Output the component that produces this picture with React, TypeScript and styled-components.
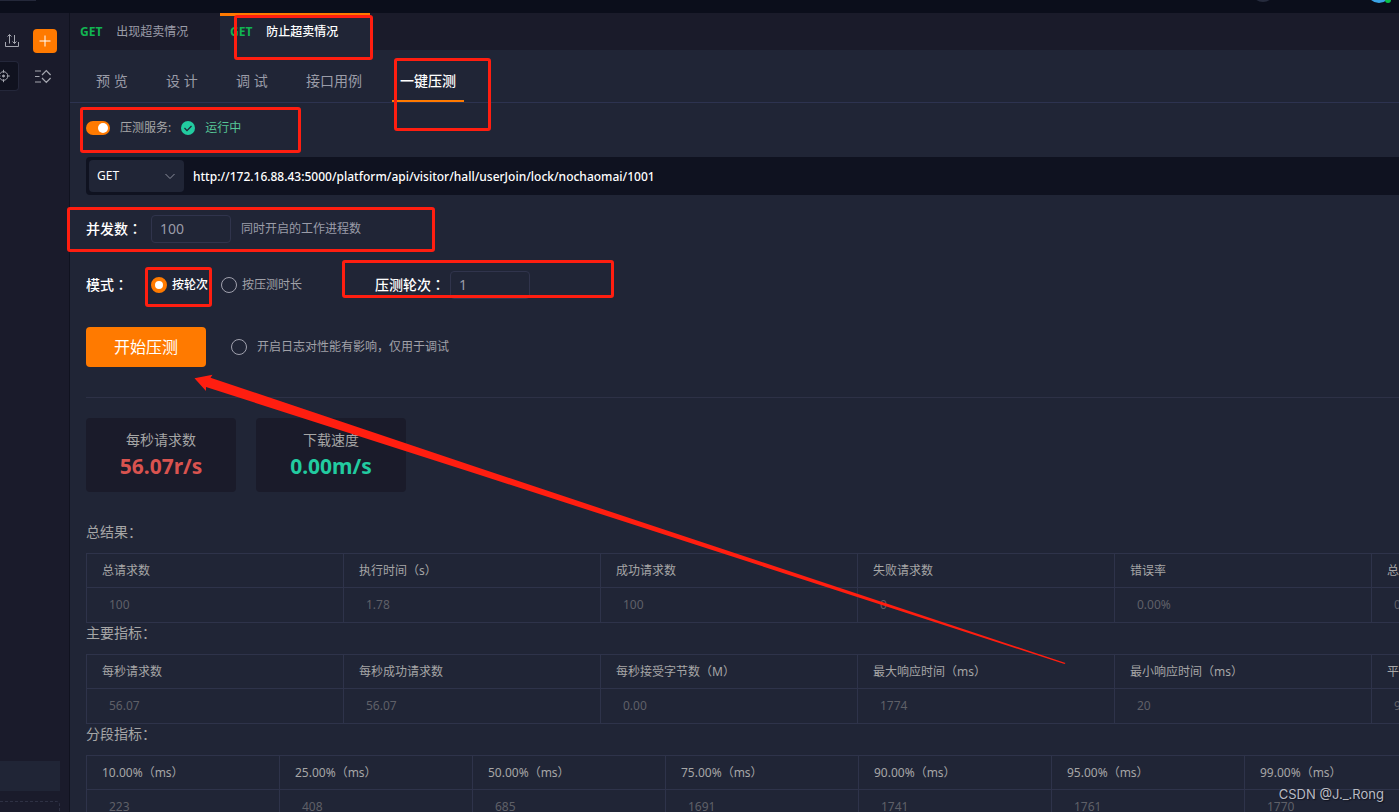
import React from "react";
import styled, { createGlobalStyle } from "styled-components";

const GlobalStyle = createGlobalStyle`
  *, *::before, *::after { box-sizing: border-box; }
  html, body, #root { height: 100%; }
  body {
    margin: 0;
    overflow: hidden;
    background: #202536;
    color: #a6a6a6;
    font-family: "Noto Sans", "Noto Sans CJK SC", sans-serif;
    font-size: 12px;
    line-height: 20px;
  }
  button, input, select { font: inherit; }
`;

const Page = styled.div`
  position: relative;
  display: flex;
  flex-direction: column;
  height: 100vh;
  overflow: hidden;
`;

const TopBar = styled.header`
  display: flex;
  justify-content: space-between;
  flex: none;
  height: 13px;
  background: #0b0e1b;
`;

const TopTab = styled.div`
  width: 36px;
  height: 1px;
  background: #24283a;
`;

const Body = styled.div`
  display: flex;
  flex: 1;
  min-height: 0;
`;

const Sidebar = styled.aside`
  display: flex;
  flex-direction: column;
  flex: none;
  width: 70px;
  background: #1a1b2b;
  border-right: 1px solid #10121f;
`;

const SideRow = styled.div<{ $top: number }>`
  display: flex;
  align-items: center;
  justify-content: space-between;
  padding-right: 12px;
  margin-top: ${(p) => p.$top}px;
`;

const IconButton = styled.button<{ $indent?: number }>`
  display: flex;
  padding: 0;
  margin-left: ${(p) => p.$indent ?? 0}px;
  border: 0;
  background: none;
  color: #a5a7b0;
`;

const AddButton = styled(IconButton)`
  align-items: center;
  justify-content: center;
  width: 24px;
  height: 24px;
  border-radius: 4px;
  background: #ff7a00;
  color: #fff;
`;

const LocateButton = styled(IconButton)`
  align-items: center;
  width: 19px;
  height: 30px;
  border: 1px solid #24273a;
  border-left: 0;
  border-radius: 0 4px 4px 0;
  background: #10121f;
`;

const SideSelected = styled.div`
  width: 60px;
  height: 30px;
  margin-top: auto;
  background: #202536;
`;

const SideDropArea = styled.div`
  width: 60px;
  height: 11px;
  margin-top: 10px;
  border: 1px dashed #2e3144;
  border-width: 1px 1px 0 0;
  border-radius: 0 4px 0 0;
`;

const Main = styled.main`
  flex: 1;
  min-width: 0;
  overflow: hidden;
`;

const TabBar = styled.div`
  display: flex;
  height: 37px;
  background: #1a1b2a;
`;

const Tab = styled.button<{ $active?: boolean }>`
  display: flex;
  align-items: center;
  gap: 14px;
  width: 150px;
  padding: 0 10px;
  border: 0;
  border-top: 3px solid ${(p) => (p.$active ? "#ff7a00" : "transparent")};
  border-bottom: 3px solid transparent;
  background: ${(p) => (p.$active ? "#202536" : "none")};
  color: ${(p) => (p.$active ? "#fff" : "#9a9ca8")};
  font-weight: ${(p) => (p.$active ? 500 : 400)};
`;

const Method = styled.span`
  color: #12b452;
  font-weight: 700;
`;

const SubNav = styled.nav`
  display: flex;
  gap: 22px;
  height: 53px;
  padding-left: 18px;
  border-bottom: 1px solid #2d3350;
`;

const SubTab = styled.a<{ $active?: boolean }>`
  min-width: 48px;
  padding: 21px 8px 0;
  border-bottom: 2px solid ${(p) => (p.$active ? "#ff7a00" : "transparent")};
  color: ${(p) => (p.$active ? "#fff" : "#9a9ca8")};
  font-size: 14px;
  font-weight: ${(p) => (p.$active ? 500 : 400)};
  text-decoration: none;
  white-space: nowrap;
`;

const Content = styled.div`
  padding-left: 16px;
`;

const ServiceRow = styled.div`
  display: flex;
  align-items: center;
  height: 50px;
  margin-bottom: 4px;
`;

const Switch = styled.input`
  appearance: none;
  display: flex;
  align-items: center;
  justify-content: flex-end;
  width: 24px;
  height: 14px;
  margin: 0 10px 0 0;
  padding: 2px;
  border-radius: 7px;
  background: #ff7a00;
  &::before {
    content: "";
    width: 10px;
    height: 10px;
    border-radius: 50%;
    background: #fff;
  }
`;

const CheckIcon = styled.svg`
  margin: 0 10px;
`;

const Running = styled.span`
  color: #56c596;
`;

const UrlBar = styled.div`
  display: flex;
  align-items: center;
  gap: 9px;
  height: 38px;
  padding: 3px;
  border-radius: 4px 0 0 4px;
  background: #0f1220;
  color: #fff;
`;

const SelectWrap = styled.div`
  display: grid;
  align-items: center;
  flex: none;
  width: 95px;
  height: 32px;
  border-radius: 4px;
  background: #202536;
  > * { grid-area: 1 / 1; }
  svg { justify-self: end; margin-right: 8px; pointer-events: none; }
`;

const MethodSelect = styled.select`
  appearance: none;
  width: 100%;
  height: 32px;
  padding: 0 8px;
  border: 0;
  background: none;
  color: #fff;
`;

const UrlInput = styled.input`
  flex: 1;
  min-width: 0;
  padding: 2px 0 0;
  border: 0;
  background: none;
  color: #fff;
  font-weight: 500;
`;

const FormRow = styled.div<{ $top: number }>`
  display: flex;
  align-items: center;
  height: 28px;
  margin-top: ${(p) => p.$top}px;
`;

const FieldLabel = styled.label<{ $width: number }>`
  flex: none;
  width: ${(p) => p.$width}px;
  padding-bottom: 2px;
  color: #fff;
  font-size: 14px;
  font-weight: 500;
`;

const Colon = styled.span`
  font-family: "Noto Sans CJK TC", sans-serif;
`;

const NumberInput = styled.input`
  width: 80px;
  height: 28px;
  margin-right: 10px;
  padding: 0 8px 2px;
  border: 1px solid #30344c;
  border-radius: 4px;
  background: none;
  color: #9a9ca8;
  font-size: 14px;
`;

const Hint = styled.span`
  color: #9a9ca8;
`;

const Choice = styled.label<{ $checked?: boolean; $gap: number }>`
  display: flex;
  align-items: center;
  gap: ${(p) => p.$gap}px;
  color: ${(p) => (p.$checked ? "#fff" : "#a0a1a8")};
  font-weight: ${(p) => (p.$checked ? 500 : 400)};
  white-space: nowrap;
`;

const Dot = styled.input`
  appearance: none;
  width: 16px;
  height: 16px;
  margin: 0;
  border: 1px solid #a0a1ae;
  border-radius: 50%;
  &:checked {
    border: 4px solid #ff7a00;
    background: #fff;
  }
`;

const ChoiceGroup = styled.div`
  display: flex;
  gap: 13px;
  margin-right: 73px;
`;

const ActionRow = styled.div`
  display: flex;
  align-items: center;
  gap: 25px;
  margin: 28px 0 30px;
`;

const StartButton = styled.button`
  width: 120px;
  height: 40px;
  padding: 0;
  border: 0;
  border-radius: 4px;
  background: #ff7a00;
  color: #fff;
  font-size: 16px;
`;

const Stats = styled.div`
  display: flex;
  gap: 20px;
  padding-top: 20px;
  margin-bottom: 30px;
  border-top: 1px solid #2d3146;
`;

const StatCard = styled.div`
  width: 150px;
  height: 74px;
  padding-top: 12px;
  border-radius: 4px;
  background: #1a1b2a;
  font-size: 14px;
  text-align: center;
`;

const StatValue = styled.div<{ $color: string }>`
  color: ${(p) => p.$color};
  font-size: 21px;
  font-weight: 700;
  line-height: 32px;
`;

const SectionTitle = styled.h2`
  height: 21px;
  margin: 0 0 10px;
  font-size: 14px;
  font-weight: 400;
  line-height: 19px;
`;

const cellBorder = "1px solid #2e334a";

const Table = styled.table`
  width: max-content;
  border-collapse: separate;
  border-spacing: 0;
  border-top: ${cellBorder};
  border-left: ${cellBorder};
`;

const HeadCell = styled.th<{ $width: number }>`
  min-width: ${(p) => p.$width}px;
  height: 34px;
  padding: 0 0 0 15px;
  border-right: ${cellBorder};
  border-bottom: ${cellBorder};
  font-weight: 400;
  text-align: left;
`;

const Cell = styled.td`
  height: 35px;
  padding: 0 0 0 22px;
  border-right: ${cellBorder};
  border-bottom: ${cellBorder};
  color: #5f6068;
`;

const Watermark = styled.div`
  position: absolute;
  right: 15px;
  bottom: 8px;
  color: #b9bbc2;
  font-family: Inter, sans-serif;
  font-size: 13px;
  text-shadow: 1px 1px 1px #11131f;
`;

const Mark = styled.div<{ $x: number; $y: number; $w: number; $h: number }>`
  position: absolute;
  left: ${(p) => p.$x}px;
  top: ${(p) => p.$y}px;
  width: ${(p) => p.$w}px;
  height: ${(p) => p.$h}px;
  border: 3px solid #ff1e10;
  border-radius: 3px;
  pointer-events: none;
`;

const Arrow = styled.svg`
  position: absolute;
  left: 190px;
  top: 370px;
  pointer-events: none;
`;

const marks = [
  [234, 15, 139, 45],
  [394, 58, 97, 73],
  [80, 107, 221, 46],
  [67, 207, 368, 45],
  [145, 267, 67, 40],
  [342, 260, 272, 38],
];

type ResultProps = { title: string; width: number; heads: string[]; values: string[] };

function Result({ title, width, heads, values }: ResultProps) {
  return (
    <section>
      <SectionTitle>{title}</SectionTitle>
      <Table>
        <thead>
          <tr>
            {heads.map((h) => (
              <HeadCell key={h} $width={width}>{h}</HeadCell>
            ))}
          </tr>
        </thead>
        <tbody>
          <tr>
            {values.map((v, i) => (
              <Cell key={i}>{v}</Cell>
            ))}
          </tr>
        </tbody>
      </Table>
    </section>
  );
}

export default function App() {
  return (
    <Page>
      <GlobalStyle />
      <TopBar>
        <TopTab />
        <svg width="149" height="6" viewBox="0 0 149 6">
          <circle cx="13" cy="-10" r="12" fill="#262b3d" />
          <circle cx="129" cy="-9" r="12" fill="#3ba4e6" />
          <circle cx="138" cy="0" r="3" fill="#0cc04a" />
        </svg>
      </TopBar>
      <Body>
        <Sidebar>
          <SideRow $top={16}>
            <IconButton $indent={4} aria-label="导入">
              <svg width="16" height="16" viewBox="0 0 16 16" fill="none" stroke="currentColor">
                <path d="M1.500 9v4.500h13V9M5.500 10.500V1.500M3.500 3.500l2-2 2 2M10.500 2v8.500M8.500 8.500l2 2 2-2" />
              </svg>
            </IconButton>
            <AddButton aria-label="新建">
              <svg width="12" height="12" viewBox="0 0 12 12" stroke="currentColor">
                <path d="M6 .5v11M.5 6h11" />
              </svg>
            </AddButton>
          </SideRow>
          <SideRow $top={8}>
            <LocateButton aria-label="定位">
              <svg width="12" height="14" viewBox="0 0 12 14" fill="none" stroke="currentColor">
                <circle cx="3.500" cy="7" r="4.300" />
                <circle cx="3.500" cy="7" r="1" fill="currentColor" />
                <path d="M3.500 .8v3M3.500 10.200v3M6.800 7h3M0 7h.5" />
              </svg>
            </LocateButton>
            <IconButton aria-label="展开">
              <svg width="22" height="16" viewBox="0 0 22 16" fill="none" stroke="currentColor" strokeWidth="1.200">
                <path d="M0 3h6M0 8.500h4.500M0 14h6M7 7l4.300-4.500L15.600 7M7 10l4.300 4.500 4.300-4.500" />
              </svg>
            </IconButton>
          </SideRow>
          <SideSelected />
          <SideDropArea />
        </Sidebar>
        <Main>
          <TabBar>
            <Tab><Method>GET</Method>出现超卖情况</Tab>
            <Tab $active><Method>GET</Method>防止超卖情况</Tab>
          </TabBar>
          <SubNav>
            <SubTab href="#preview">预 览</SubTab>
            <SubTab href="#design">设 计</SubTab>
            <SubTab href="#debug">调 试</SubTab>
            <SubTab href="#cases">接口用例</SubTab>
            <SubTab href="#stress" $active>一键压测</SubTab>
          </SubNav>
          <Content>
            <ServiceRow>
              <Switch id="service" type="checkbox" defaultChecked />
              <label htmlFor="service">压测服务:</label>
              <CheckIcon width="14" height="14" viewBox="0 0 14 14">
                <circle cx="7" cy="7" r="7" fill="#22cba0" />
                <path d="M3.500 7l2.500 2.600L10.500 5" fill="none" stroke="#202536" strokeWidth="1.300" />
              </CheckIcon>
              <Running>运行中</Running>
            </ServiceRow>
            <UrlBar>
              <SelectWrap>
                <MethodSelect aria-label="请求方法" defaultValue="GET">
                  <option>GET</option>
                </MethodSelect>
                <svg width="12" height="12" viewBox="0 0 12 12" fill="none" stroke="#8b8e9c">
                  <path d="M1.500 4 6 8.500 10.500 4" />
                </svg>
              </SelectWrap>
              <UrlInput
                aria-label="请求地址"
                defaultValue="http://172.16.88.43:5000/platform/api/visitor/hall/userJoin/lock/nochaomai/1001"
              />
            </UrlBar>
            <FormRow $top={20}>
              <FieldLabel $width={65} htmlFor="workers">并发数<Colon>：</Colon></FieldLabel>
              <NumberInput id="workers" defaultValue="100" />
              <Hint>同时开启的工作进程数</Hint>
            </FormRow>
            <FormRow $top={28}>
              <FieldLabel as="span" $width={65}>模式<Colon>：</Colon></FieldLabel>
              <ChoiceGroup>
                <Choice $checked $gap={5}><Dot type="radio" name="mode" defaultChecked />按轮次</Choice>
                <Choice $gap={5}><Dot type="radio" name="mode" />按压测时长</Choice>
              </ChoiceGroup>
              <FieldLabel $width={75} htmlFor="rounds">压测轮次<Colon>：</Colon></FieldLabel>
              <NumberInput id="rounds" defaultValue="1" />
            </FormRow>
            <ActionRow>
              <StartButton>开始压测</StartButton>
              <Choice $gap={10}><Dot type="checkbox" />开启日志对性能有影响，仅用于调试</Choice>
            </ActionRow>
            <Stats>
              <StatCard>每秒请求数<StatValue $color="#d9534f">56.07r/s</StatValue></StatCard>
              <StatCard>下载速度<StatValue $color="#22cba0">0.00m/s</StatValue></StatCard>
            </Stats>
            <Result
              title="总结果："
              width={257}
              heads={["总请求数", "执行时间（s）", "成功请求数", "失败请求数", "错误率", "总"]}
              values={["100", "1.78", "100", "0", "0.00%", "0"]}
            />
            <Result
              title="主要指标："
              width={257}
              heads={["每秒请求数", "每秒成功请求数", "每秒接受字节数（M）", "最大响应时间（ms）", "最小响应时间（ms）", "平"]}
              values={["56.07", "56.07", "0.00", "1774", "20", "9"]}
            />
            <Result
              title="分段指标："
              width={193}
              heads={["10.00%（ms）", "25.00%（ms）", "50.00%（ms）", "75.00%（ms）", "90.00%（ms）", "95.00%（ms）", "99.00%（ms）"]}
              values={["223", "408", "685", "1691", "1741", "1761", "1770"]}
            />
          </Content>
        </Main>
      </Body>
      {marks.map(([x, y, w, h]) => (
        <Mark key={`${x}-${y}`} $x={x} $y={y} $w={w} $h={h} />
      ))}
      <Arrow width="880" height="300" viewBox="0 0 880 300">
        <path d="M4.500 8.300 22.500 4.800 20.500 7.700 290 98.300 875.500 293 874.500 294 290 105 16 17 16 21Z" fill="#ff1e10" />
      </Arrow>
      <Watermark>CSDN @J._.Rong</Watermark>
    </Page>
  );
}
